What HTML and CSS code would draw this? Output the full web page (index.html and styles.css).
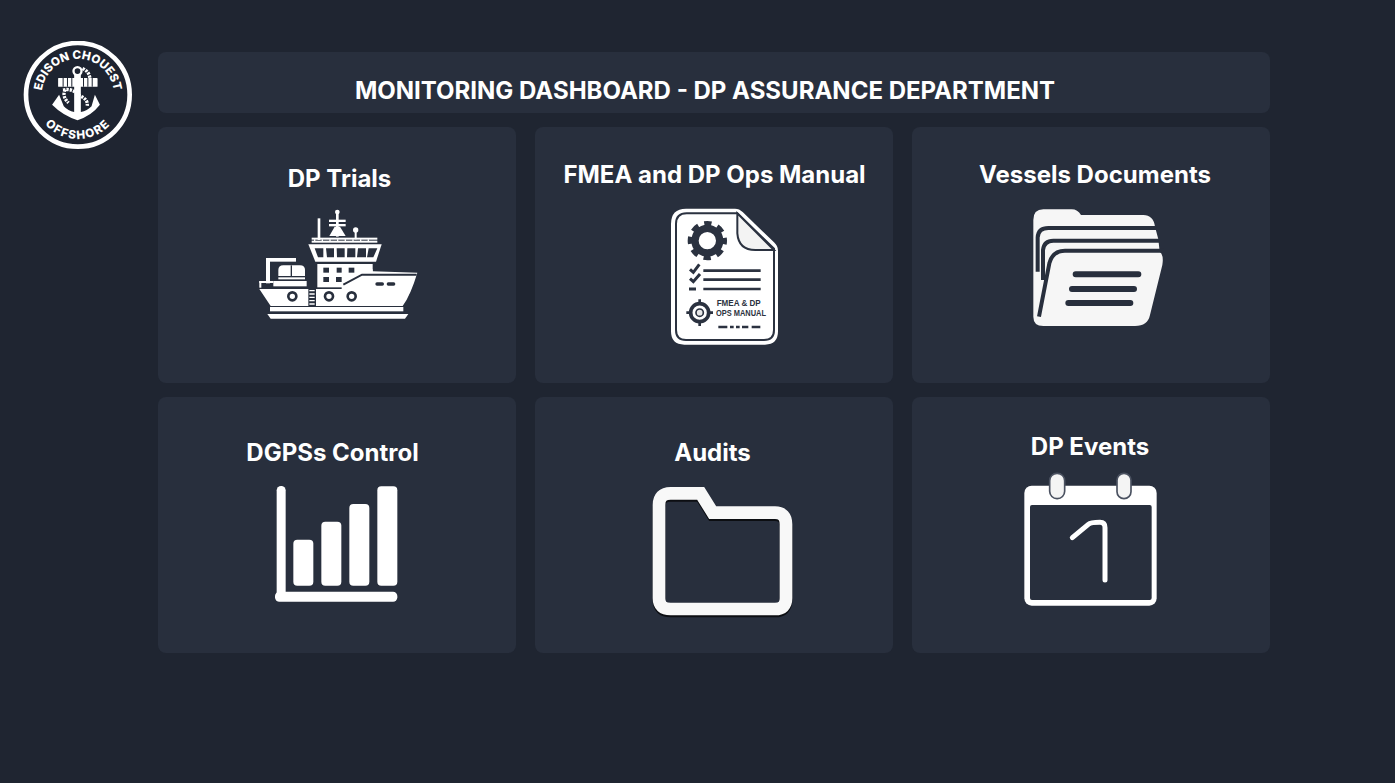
FILE: index.html
```html
<!DOCTYPE html>
<html lang="en">
<head>
<meta charset="utf-8">
<title>Monitoring Dashboard - DP Assurance Department</title>
<link rel="stylesheet" href="styles.css">
</head>
<body>
<div class="page">
  <aside class="brand">
    <svg class="logo" viewBox="70 31 329 323" aria-label="Edison Chouest Offshore">
      <defs>
        <path id="arcTop" d="M132 228 A108 108 0 1 1 336 228"/>
        <path id="arcBot" d="M102 192 A132 132 0 0 0 366 192"/>
      </defs>
      <circle cx="234" cy="192" r="155" class="logo-disc"/>
      <text class="logo-text"><textPath href="#arcTop" startOffset="50%" text-anchor="middle">EDISON CHOUEST</textPath></text>
      <text class="logo-text logo-text-wide"><textPath href="#arcBot" startOffset="50%" text-anchor="middle">OFFSHORE</textPath></text>
      <circle cx="233" cy="121" r="12" class="logo-ring"/>
      <rect x="223" y="130" width="20" height="130" fill="#fff"/>
      <rect x="175" y="142" width="118" height="26" rx="2" fill="#fff"/>
      <path d="M190 142V168M203 142V168M216 142V168M251 142V168M264 142V168M277 142V168" class="logo-cut"/>
      <path d="M157 222 L178 192 L192 226 Q205 240 223 243 H243 Q262 240 275 226 L285 192 L300 222 Q275 255 233 268 Q190 255 157 222Z" fill="#fff"/>
      <path d="M190 178 Q215 170 240 195 Q265 205 262 225 M196 176 Q186 196 206 216 M248 113 Q268 122 270 142" class="logo-rope"/>
    </svg>
  </aside>
  <main class="board">
    <header class="head"><h1 class="head-title">MONITORING DASHBOARD - DP ASSURANCE DEPARTMENT</h1></header>
    <section class="grid">

      <article class="card card-trials">
        <h2 class="card-title">DP Trials</h2>
        <svg class="icon icon-ship" viewBox="0 0 600 390">
          <g fill="#fff">
            <rect x="233" y="55" width="8" height="65"/>
            <circle cx="292" cy="36" r="7"/>
            <rect x="288" y="36" width="8" height="74"/>
            <rect x="267" y="59" width="50" height="7"/>
            <rect x="267" y="72" width="50" height="7"/>
            <path d="M268 108 L284 80 H300 L317 108Z"/>
            <circle cx="347" cy="90" r="8"/>
            <rect x="344" y="90" width="6" height="28"/>
            <rect x="215" y="113" width="197" height="6"/>
            <rect x="215" y="122" width="197" height="6"/>
            <path d="M222 118h4v6h-4zM245 118h4v6h-4zM268 118h4v6h-4zM291 118h4v6h-4zM314 118h4v6h-4zM337 118h4v6h-4zM360 118h4v6h-4zM383 118h4v6h-4z"/>
            <path d="M205 133 H425 L408 185 H226Z"/>
            <rect x="232" y="192" width="166" height="70"/>
            <path d="M305 250 L362 208 H398 V214 L532 218 Q512 285 488 318 H92 L58 267 H305Z"/>
            <rect x="78" y="174" width="12" height="76"/>
            <rect x="78" y="174" width="90" height="11"/>
            <path d="M115 228 V210 Q115 196 130 196 H180 Q195 196 195 210 V228Z"/>
            <rect x="115" y="232" width="80" height="6"/>
            <rect x="100" y="243" width="100" height="16"/>
            <rect x="58" y="243" width="42" height="6"/>
            <rect x="58" y="243" width="6" height="20"/>
            <rect x="90" y="321" width="400" height="13"/>
            <path d="M82 342 H505 L495 356 H92Z"/>
          </g>
          <g class="ship-dark">
            <path d="M224 145H250V172H234ZM258 145H282V172H261ZM290 145H314V172H291ZM322 145H346V172H321ZM354 145H378V172H351ZM386 145H412L400 172H381Z"/>
            <rect x="250" y="203" width="17" height="15"/><rect x="290" y="203" width="15" height="15"/><rect x="326" y="203" width="17" height="15"/>
            <rect x="250" y="231" width="17" height="15"/><rect x="288" y="231" width="17" height="15"/>
            <rect x="152" y="196" width="4" height="32"/>
            <rect x="406" y="247" width="26" height="10" rx="5"/><rect x="440" y="247" width="26" height="10" rx="5"/>
            <path d="M205 267H228V318H205Z"/>
            <path d="M508 284 L522 268 L518 284Z"/>
          </g>
          <path d="M310 254 L366 224 H530" class="ship-line"/>
          <path d="M208 272H224M208 282H224M208 292H224M208 302H224M208 312H224" class="ship-rungs"/>
          <circle cx="157" cy="289" r="12" class="ship-port"/>
          <circle cx="267" cy="289" r="12" class="ship-port"/>
          <circle cx="335" cy="289" r="12" class="ship-port"/>
        </svg>
      </article>

      <article class="card card-fmea">
        <h2 class="card-title">FMEA and DP Ops Manual</h2>
        <svg class="icon icon-doc" viewBox="0 0 450 450">
          <path d="M108 26 H255 Q268 26 278 36 L372 127 Q384 138 384 152 V394 Q384 434 345 434 H103 Q63 434 63 394 V72 Q63 26 108 26Z" fill="#fff"/>
          <path d="M110 40 H262 L372 146 V390 Q372 420 342 420 H108 Q78 420 78 390 V72 Q78 40 110 40Z" class="doc-line"/>
          <path d="M262 40 V100 Q266 150 316 150 H372Z" class="doc-fold"/>
          <circle cx="172" cy="122" r="37" class="doc-gear"/>
          <circle cx="172" cy="122" r="52" class="doc-teeth"/>
          <path d="M160 212H332M160 239H332M160 267H332" class="doc-rule"/>
          <path d="M120 208 L130 217 L148 193M120 236 L130 245 L150 222M117 267H138" class="doc-check"/>
          <circle cx="149" cy="338" r="27" class="doc-small"/>
          <circle cx="149" cy="338" r="11" class="doc-small-in"/>
          <path d="M149 298V311M149 365V378M109 338H122M176 338H189" class="doc-rule"/>
          <text x="200" y="317" class="doc-text" textLength="132" lengthAdjust="spacingAndGlyphs">FMEA &amp; DP</text>
          <text x="198" y="347" class="doc-text" textLength="150" lengthAdjust="spacingAndGlyphs">OPS MANUAL</text>
          <path d="M205 381H232M240 381H251M258 381H269M276 381H295M305 381H331" class="doc-rule"/>
        </svg>
      </article>

      <article class="card card-vessels">
        <h2 class="card-title">Vessels Documents</h2>
        <svg class="icon icon-files" viewBox="0 0 480 405">
          <path d="M55 60 Q55 28 85 28 H170 Q188 28 198 45 H385 Q415 45 420 80 L430 118 L434 155 Q447 165 442 195 L405 345 Q398 378 360 378 H85 Q55 378 55 350Z" fill="#f6f6f6"/>
          <path d="M68 215 V112 Q70 84 100 84 H425" class="files-line"/>
          <path d="M84 240 V150 Q87 122 115 122 H434" class="files-line"/>
          <path d="M72 350 L103 190 Q113 152 150 152 H447" class="files-line"/>
          <path d="M182 223H370M171 267H357M160 309H346" class="files-rule"/>
        </svg>
      </article>

      <article class="card card-dgps">
        <h2 class="card-title">DGPSs Control</h2>
        <svg class="icon icon-bars" viewBox="0 0 450 405">
          <g fill="#fff">
            <rect x="50" y="33" width="27" height="340" rx="13"/>
            <rect x="45" y="350" width="367" height="30" rx="13"/>
            <rect x="100" y="194" width="60" height="138" rx="12"/>
            <rect x="184" y="140" width="60" height="192" rx="12"/>
            <rect x="268" y="87" width="60" height="245" rx="12"/>
            <rect x="352" y="34" width="60" height="298" rx="12"/>
          </g>
        </svg>
      </article>

      <article class="card card-audits">
        <h2 class="card-title">Audits</h2>
        <svg class="icon icon-folder" viewBox="0 0 495 450">
          <path d="M57 90 Q57 55 92 55 H182 L218 113 H405 Q438 113 438 148 V370 Q438 402 405 402 H92 Q57 402 57 370Z" class="folder-shadow"/>
          <path d="M57 90 Q57 55 92 55 H182 L218 113 H405 Q438 113 438 148 V370 Q438 402 405 402 H92 Q57 402 57 370Z" class="folder-stroke"/>
        </svg>
      </article>

      <article class="card card-events">
        <h2 class="card-title">DP Events</h2>
        <svg class="icon icon-cal" viewBox="0 0 480 450">
          <rect x="43" y="62" width="397" height="360" rx="22" fill="#fff"/>
          <rect x="60" y="120" width="365" height="285" rx="6" class="cal-face"/>
          <rect x="119" y="25" width="45" height="76" rx="22" class="cal-ring"/>
          <rect x="321" y="25" width="42" height="76" rx="21" class="cal-ring"/>
          <path d="M187 218 L235 178 Q242 172 270 172 Q285 172 285 188 V345" class="cal-digit"/>
        </svg>
      </article>

    </section>
  </main>
</div>
</body>
</html>
```
FILE: styles.css
```css
* { box-sizing: border-box; }
html, body { margin: 0; height: 100%; }
body {
  background: #1f2531;
  font-family: Inter, "Liberation Sans", sans-serif;
  color: #fff;
  overflow: hidden;
}
.page { display: flex; height: 783px; padding-top: 41px; }
.brand { flex: 0 0 158px; padding-left: 23px; }
.logo { display: block; width: 110px; height: 108px; }
.logo-disc { fill: #1d2330; stroke: #fff; stroke-width: 14; }
.logo-text { font: 800 35px Inter, "Liberation Sans", sans-serif; fill: #fff; }
.logo-text-wide { letter-spacing: 4px; }
.logo-ring { fill: none; stroke: #fff; stroke-width: 7; }
.logo-cut { stroke: #1d2330; stroke-width: 3; fill: none; }
.logo-rope { stroke: #fff; stroke-width: 10; fill: none; stroke-dasharray: 7 3; }

.board { width: 1112px; margin-top: 11px; display: flex; flex-direction: column; gap: 14px; }
.head { height: 61px; background: #282f3d; border-radius: 8px; padding-top: 24px; display: flex; justify-content: center; }
.head-title { margin: 0 18px 0 0; font-size: 24px; line-height: 30px; font-weight: 650; white-space: nowrap; }

.grid { display: grid; grid-template-columns: repeat(3, 358px); grid-auto-rows: 256px; column-gap: 19px; row-gap: 14px; }
.card { background: #282f3d; border-radius: 8px; display: flex; flex-direction: column; align-items: center; }
.card-title { margin: 0; font-size: 24px; line-height: 30px; font-weight: 650; white-space: nowrap; }
.icon { display: block; flex: none; }

.card-trials { padding-top: 37px; }
.card-trials .card-title { margin-left: 5px; }
.icon-ship { width: 200px; height: 130px; margin: 6px 0 0 6px; }

.card-fmea { padding-top: 33px; }
.card-fmea .card-title { margin-left: 1px; }
.icon-doc { width: 150px; height: 150px; margin: 10px 0 0 21px; }

.card-vessels { padding-top: 33px; }
.card-vessels .card-title { margin-left: 8px; }
.icon-files { width: 160px; height: 135px; margin: 10px 0 0 8px; }

.card-dgps { padding-top: 41px; }
.card-dgps .card-title { margin-right: 9px; }
.icon-bars { width: 150px; height: 135px; margin: 7px 4px 0 0; }

.card-audits { padding-top: 41px; }
.card-audits .card-title { margin-right: 3px; }
.icon-folder { width: 165px; height: 150px; margin: 7px 0 0 17px; }

.card-events { padding-top: 35px; }
.card-events .card-title { margin-right: 2px; }
.icon-cal { width: 160px; height: 150px; margin: 3px 2px 0 0; }

.ship-dark { fill: #282f3d; }
.ship-line { fill: none; stroke: #282f3d; stroke-width: 6; }
.ship-rungs { fill: none; stroke: #fff; stroke-width: 4; }
.ship-port { fill: #fff; stroke: #282f3d; stroke-width: 8; }

.doc-line { fill: none; stroke: #2b3240; stroke-width: 6; }
.doc-fold { fill: #f3f3f3; stroke: #2b3240; stroke-width: 6; }
.doc-gear { fill: #fff; stroke: #2b3240; stroke-width: 22; }
.doc-teeth { fill: none; stroke: #2b3240; stroke-width: 14; stroke-dasharray: 22 18.84; stroke-dashoffset: 11; }
.doc-rule { fill: none; stroke: #2b3240; stroke-width: 8; }
.doc-check { fill: none; stroke: #2b3240; stroke-width: 9; }
.doc-small { fill: #fff; stroke: #2b3240; stroke-width: 11; }
.doc-small-in { fill: #e9e9e9; stroke: #2b3240; stroke-width: 5; }
.doc-text { font: 700 27px "Liberation Sans", sans-serif; fill: #2b3240; }

.files-line { fill: none; stroke: #282f3d; stroke-width: 12; }
.files-rule { fill: none; stroke: #282f3d; stroke-width: 18; stroke-linecap: round; }

.folder-shadow { fill: none; stroke: #0c0e12; stroke-width: 38; transform: translateY(6px); }
.folder-stroke { fill: none; stroke: #f8f8f8; stroke-width: 38; }

.cal-face { fill: #282f3d; }
.cal-ring { fill: #f4f4f4; stroke: #4a5160; stroke-width: 5; }
.cal-digit { fill: none; stroke: #fff; stroke-width: 15; stroke-linecap: round; stroke-linejoin: round; }
```
